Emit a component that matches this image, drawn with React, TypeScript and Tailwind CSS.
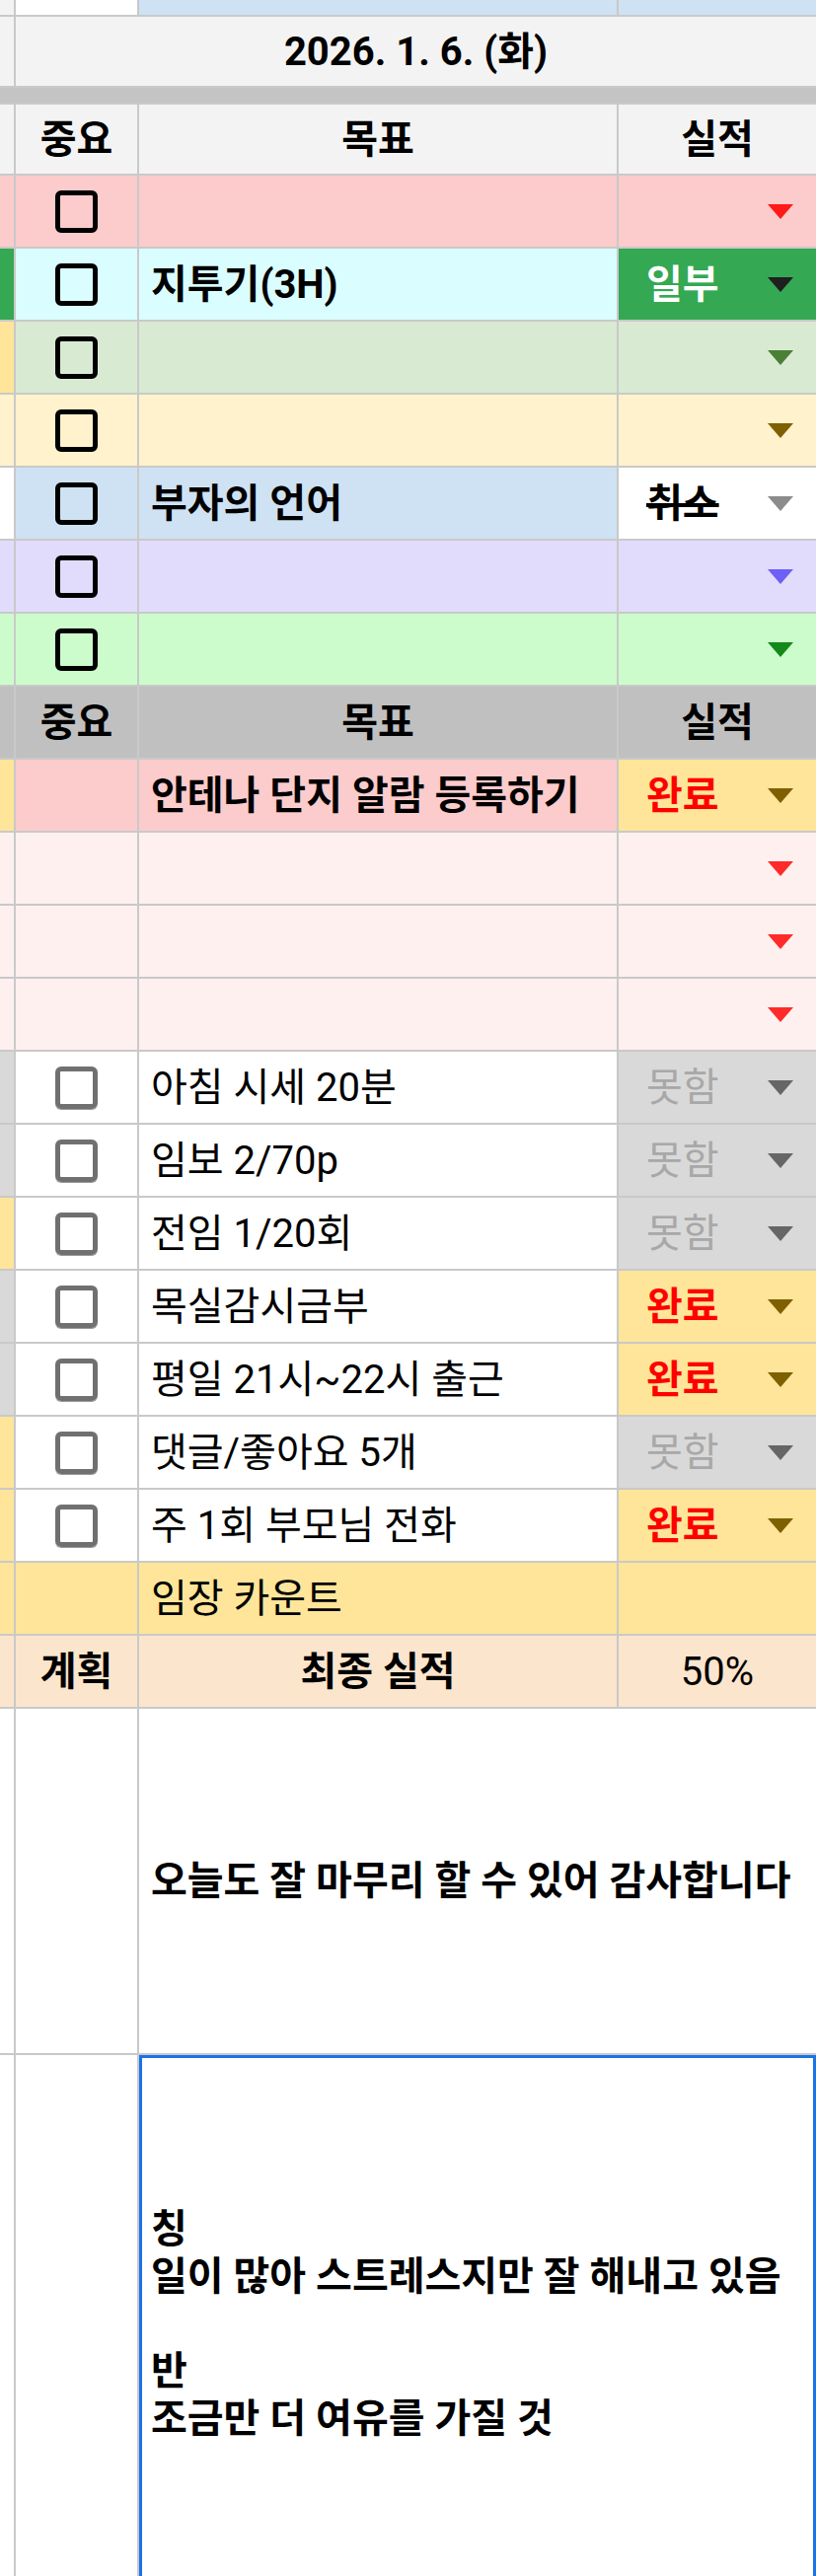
import React from 'react';

type Kind = 'part' | 'cancel' | 'done' | 'fail' | 'none';

interface GoalRow {
  strip: string;
  chk: string;
  goal: string;
  result: string;
  text?: string;
  bold?: boolean;
  kind: Kind;
  arrow: string;
  box?: 'dark' | 'dim' | 'none';
}

const topRows: GoalRow[] = [
  { strip: 'bg-[#fccbcb]', chk: 'bg-[#fccbcb]', goal: 'bg-[#fccbcb]', result: 'bg-[#fccbcb]', kind: 'none', arrow: 'fill-[#ff1a1a]', box: 'dark' },
  { strip: 'bg-[#34a853]', chk: 'bg-[#dafeff]', goal: 'bg-[#dafeff]', result: 'bg-[#34a853]', text: '지투기(3H)', bold: true, kind: 'part', arrow: 'fill-[#1f1f1f]', box: 'dark' },
  { strip: 'bg-[#ffe599]', chk: 'bg-[#d9ead3]', goal: 'bg-[#d9ead3]', result: 'bg-[#d9ead3]', kind: 'none', arrow: 'fill-[#4a7f36]', box: 'dark' },
  { strip: 'bg-[#fff2cc]', chk: 'bg-[#fff2cc]', goal: 'bg-[#fff2cc]', result: 'bg-[#fff2cc]', kind: 'none', arrow: 'fill-[#7f6000]', box: 'dark' },
  { strip: 'bg-white', chk: 'bg-[#cfe2f3]', goal: 'bg-[#cfe2f3]', result: 'bg-white', text: '부자의 언어', bold: true, kind: 'cancel', arrow: 'fill-[#8c8c8c]', box: 'dark' },
  { strip: 'bg-[#e1dcfc]', chk: 'bg-[#e1dcfc]', goal: 'bg-[#e1dcfc]', result: 'bg-[#e1dcfc]', kind: 'none', arrow: 'fill-[#6e5ff6]', box: 'dark' },
  { strip: 'bg-[#ccfccc]', chk: 'bg-[#ccfccc]', goal: 'bg-[#ccfccc]', result: 'bg-[#ccfccc]', kind: 'none', arrow: 'fill-[#13891a]', box: 'dark' },
];

const midRows: GoalRow[] = [
  { strip: 'bg-[#ffe599]', chk: 'bg-[#fccbcb]', goal: 'bg-[#fccbcb]', result: 'bg-[#ffe599]', text: '안테나 단지 알람 등록하기', bold: true, kind: 'done', arrow: 'fill-[#7f6000]', box: 'none' },
  { strip: 'bg-[#fff0f0]', chk: 'bg-[#fff0f0]', goal: 'bg-[#fff0f0]', result: 'bg-[#fff0f0]', kind: 'none', arrow: 'fill-[#ff2a2a]', box: 'none' },
  { strip: 'bg-[#fff0f0]', chk: 'bg-[#fff0f0]', goal: 'bg-[#fff0f0]', result: 'bg-[#fff0f0]', kind: 'none', arrow: 'fill-[#ff2a2a]', box: 'none' },
  { strip: 'bg-[#fff0f0]', chk: 'bg-[#fff0f0]', goal: 'bg-[#fff0f0]', result: 'bg-[#fff0f0]', kind: 'none', arrow: 'fill-[#ff2a2a]', box: 'none' },
];

const taskRows: GoalRow[] = [
  { strip: 'bg-[#d9d9d9]', chk: 'bg-white', goal: 'bg-white', result: 'bg-[#d9d9d9]', text: '아침 시세 20분', kind: 'fail', arrow: 'fill-[#666666]', box: 'dim' },
  { strip: 'bg-[#d9d9d9]', chk: 'bg-white', goal: 'bg-white', result: 'bg-[#d9d9d9]', text: '임보 2/70p', kind: 'fail', arrow: 'fill-[#666666]', box: 'dim' },
  { strip: 'bg-[#ffe599]', chk: 'bg-white', goal: 'bg-white', result: 'bg-[#d9d9d9]', text: '전임 1/20회', kind: 'fail', arrow: 'fill-[#666666]', box: 'dim' },
  { strip: 'bg-[#d9d9d9]', chk: 'bg-white', goal: 'bg-white', result: 'bg-[#ffe599]', text: '목실감시금부', kind: 'done', arrow: 'fill-[#7f6000]', box: 'dim' },
  { strip: 'bg-[#d9d9d9]', chk: 'bg-white', goal: 'bg-white', result: 'bg-[#ffe599]', text: '평일 21시~22시 출근', kind: 'done', arrow: 'fill-[#7f6000]', box: 'dim' },
  { strip: 'bg-[#ffe599]', chk: 'bg-white', goal: 'bg-white', result: 'bg-[#d9d9d9]', text: '댓글/좋아요 5개', kind: 'fail', arrow: 'fill-[#666666]', box: 'dim' },
  { strip: 'bg-[#ffe599]', chk: 'bg-white', goal: 'bg-white', result: 'bg-[#ffe599]', text: '주 1회 부모님 전화', kind: 'done', arrow: 'fill-[#7f6000]', box: 'dim' },
];

function Arrow({ fill }: { fill: string }) {
  return (
    <svg width="26" height="15" viewBox="0 0 26 15" className={fill}>
      <path d="M0 0h26L13 15z" />
    </svg>
  );
}

function Check({ dim }: { dim?: boolean }) {
  return (
    <div
      className={
        dim
          ? 'w-[43px] h-[43px] rounded-[6px] border-[5px] border-[#707070] shadow-[0_1px_0_#9a9a9a]'
          : 'w-[43px] h-[43px] rounded-[6px] border-[5px] border-black'
      }
    />
  );
}

function Status({ kind }: { kind: Kind }) {
  if (kind === 'part') return <span className="font-bold text-white">일부</span>;
  if (kind === 'cancel') return <span className="font-bold text-black line-through">취소</span>;
  if (kind === 'done') return <span className="font-bold text-[#ff0000]">완료</span>;
  if (kind === 'fail') return <span className="text-[#a8a8a8]">못함</span>;
  return <span />;
}

function Row({ r }: { r: GoalRow }) {
  return (
    <>
      <div className={`h-[72px] ${r.strip}`} />
      <div className={`h-[72px] flex items-center justify-center ${r.chk}`}>
        {r.box === 'dark' && <Check />}
        {r.box === 'dim' && <Check dim />}
      </div>
      <div className={`h-[72px] flex items-center pl-[12px] whitespace-nowrap ${r.goal} ${r.bold ? 'font-bold' : ''}`}>
        {r.text}
      </div>
      <div className={`h-[72px] flex items-center justify-between pl-[28px] pr-[23px] ${r.result}`}>
        <Status kind={r.kind} />
        <Arrow fill={r.arrow} />
      </div>
    </>
  );
}

function Header({ bg }: { bg: string }) {
  return (
    <>
      <div className={bg} />
      <div className={`flex items-center justify-center font-bold ${bg}`}>중요</div>
      <div className={`flex items-center justify-center font-bold ${bg}`}>목표</div>
      <div className={`flex items-center justify-center font-bold ${bg}`}>실적</div>
    </>
  );
}

export default function App() {
  return (
    <div className="w-[827px] h-[2611px] overflow-hidden bg-[#c9c9c9] grid grid-cols-[14px_123px_484px_200px] gap-[2px] content-start text-[40px] leading-[47px] text-black font-['Roboto','Noto_Sans_CJK_KR',sans-serif]">
      {/* partial row above */}
      <div className="h-[15px] bg-[#f3f3f3]" />
      <div className="h-[15px] bg-white" />
      <div className="h-[15px] bg-[#cfe2f3]" />
      <div className="h-[15px] bg-[#cfe2f3]" />

      {/* date */}
      <div className="h-[70px] bg-[#f3f3f3]" />
      <div className="h-[70px] col-span-3 bg-[#f3f3f3] flex items-center justify-center font-bold">
        2026. 1. 6. (화)
      </div>

      {/* frozen divider */}
      <div className="h-[15px] col-span-4 bg-[#c4c4c4]" />

      <div className="contents [&>div]:h-[70px]">
        <Header bg="bg-[#f3f3f3]" />
      </div>

      {topRows.map((r, i) => (
        <Row key={'t' + i} r={r} />
      ))}

      <div className="contents [&>div]:h-[72px]">
        <Header bg="bg-[#c0c0c0]" />
      </div>

      {midRows.map((r, i) => (
        <Row key={'m' + i} r={r} />
      ))}

      {taskRows.map((r, i) => (
        <Row key={'k' + i} r={r} />
      ))}

      {/* 임장 카운트 */}
      <div className="h-[72px] bg-[#ffe599]" />
      <div className="h-[72px] bg-[#ffe599]" />
      <div className="h-[72px] bg-[#ffe599] flex items-center pl-[12px]">임장 카운트</div>
      <div className="h-[72px] bg-[#ffe599]" />

      {/* 최종 실적 */}
      <div className="h-[72px] bg-[#fce5cd]" />
      <div className="h-[72px] bg-[#fce5cd] flex items-center justify-center font-bold">계획</div>
      <div className="h-[72px] bg-[#fce5cd] flex items-center justify-center font-bold">최종 실적</div>
      <div className="h-[72px] bg-[#fce5cd] flex items-center justify-center">50%</div>

      {/* 감사 */}
      <div className="h-[349px] bg-white" />
      <div className="h-[349px] bg-white" />
      <div className="h-[349px] col-span-2 bg-white flex items-center pl-[12px] font-bold whitespace-nowrap">
        오늘도 잘 마무리 할 수 있어 감사합니다
      </div>

      {/* 칭찬 / 반성 */}
      <div className="h-[528px] bg-white" />
      <div className="h-[528px] bg-white" />
      <div className="h-[528px] col-span-2 bg-white border-[3px] border-b-0 border-[#1a73e8] flex flex-col justify-center pl-[9px] pt-[14px] leading-[48px] font-bold whitespace-nowrap">
        <div>칭</div>
        <div>일이 많아 스트레스지만 잘 해내고 있음</div>
        <div>&nbsp;</div>
        <div>반</div>
        <div>조금만 더 여유를 가질 것</div>
      </div>
    </div>
  );
}
